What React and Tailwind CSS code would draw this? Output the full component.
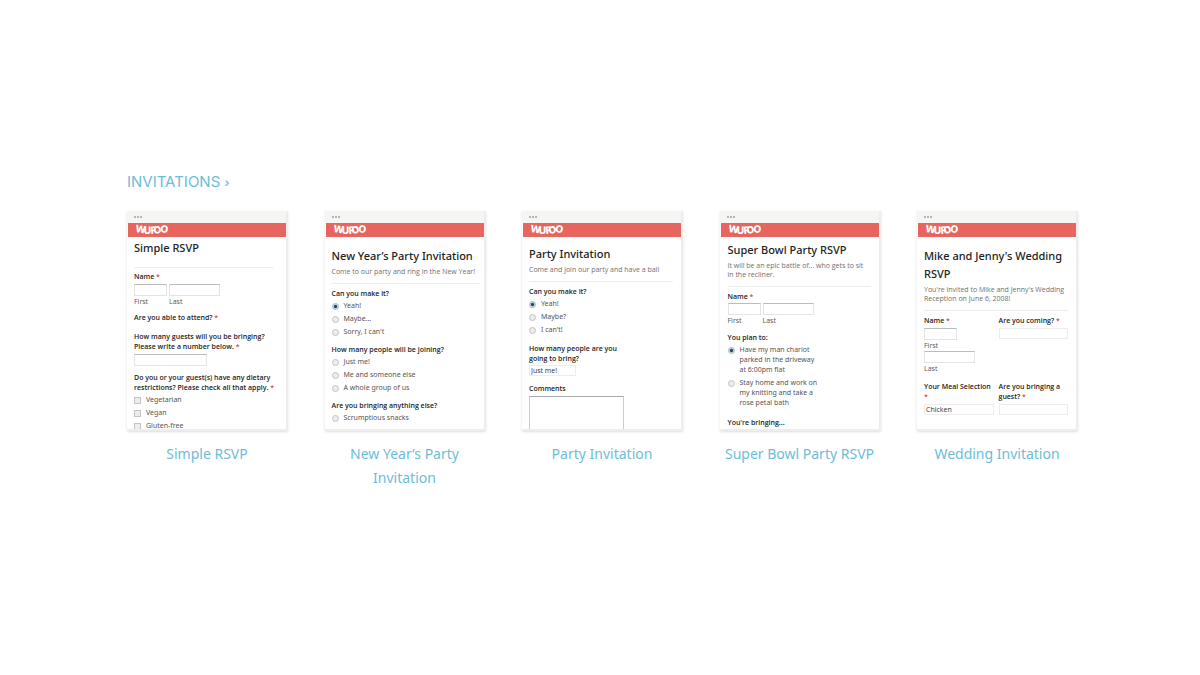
import { clsx } from 'clsx';

const Logo = () => (
    <svg width="36" height="14" viewBox="0 0 36 14" role="img" aria-label="Wufoo">
        <text
            x="0 9 16 19 25"
            y="9 11 11 11 9"
            rotate="8 -2 -6 -8 8"
            fill="#fff"
            fontFamily="Inter, sans-serif"
            fontSize="10"
            fontWeight="800"
        >
            WUFOO
        </text>
    </svg>
);

const Thumb = ({ children, className }) => (
    <div className="h-[220px] w-[161px] overflow-hidden border-r-2 border-b-2 border-[#ededed] bg-white shadow-sm">
        <div className="flex h-3 items-center gap-px bg-[#f5f5f4] pl-[7px]">
            <span className="size-[2px] bg-[#b5b5b5]" />
            <span className="size-[2px] bg-[#b5b5b5]" />
            <span className="size-[2px] bg-[#b5b5b5]" />
        </div>
        <div className="ml-px h-[14px] bg-[#e6655f] pl-[7px]">
            <Logo />
        </div>
        <div className={clsx("font-['Open_Sans',sans-serif] text-[7px] leading-[10px] text-[#555]", className)}>
            {children}
        </div>
    </div>
);

const Title = ({ children }) => (
    <h3 className="font-['Noto_Sans',sans-serif] text-[11px] leading-[18px] font-medium text-[#222]">{children}</h3>
);

const Desc = ({ children }) => (
    <p className="mt-[2px] leading-[9px] whitespace-nowrap text-[#707070]">{children}</p>
);

const Rule = ({ className }) => <hr className={clsx('border-[#eee]', className)} />;

const Star = () => <span className="text-[#e0444a]">*</span>;

const Label = ({ as: Tag = 'p', required, className, children, ...rest }) => (
    <Tag className={clsx('block font-semibold whitespace-nowrap text-[#222]', className)} {...rest}>
        {children} {required && <Star />}
    </Tag>
);

const Field = ({ className, ...rest }) => (
    <input
        type="text"
        className={clsx('block h-3 border border-[#e4e4e4] border-t-[#bbb] bg-white px-px', className)}
        {...rest}
    />
);

const Select = ({ options, className, ...rest }) => (
    <select
        className={clsx('block h-[11px] appearance-none border border-[#ececec] bg-white px-px leading-[9px] text-[#333]', className)}
        {...rest}
    >
        {options.map((o) => (
            <option key={o}>{o}</option>
        ))}
    </select>
);

const Option = ({ type = 'radio', name, checked, children }) => (
    <label className="flex items-start gap-[5px] pt-[2px] pb-px font-['Noto_Sans',sans-serif]">
        <input
            type={type}
            name={name}
            defaultChecked={checked}
            className={clsx(
                'mt-[2px] size-[7px] shrink-0 appearance-none border',
                type === 'radio' ? 'rounded-full' : '',
                checked ? 'border-[#a5bac8] bg-[radial-gradient(#1d4560_30%,#c5d8e4_60%)]' : 'border-[#c4c4c4] bg-[#ececec]'
            )}
        />
        <span className="whitespace-nowrap">{children}</span>
    </label>
);

const NameFields = ({ id }) => (
    <div className="flex gap-[2px]">
        <div>
            <Field id={`${id}-first`} className="w-[33px]" />
            <label htmlFor={`${id}-first`} className="mt-[2px] block leading-[8px]">First</label>
        </div>
        <div>
            <Field id={`${id}-last`} className="w-[51px]" />
            <label htmlFor={`${id}-last`} className="mt-[2px] block leading-[8px]">Last</label>
        </div>
    </div>
);

const SimpleRsvp = () => (
    <Thumb className="pt-[2px] pr-3 pl-[7px]">
        <Title>Simple RSVP</Title>
        <Rule className="mt-[10px]" />
        <Label required className="mt-1 mb-[2px]">Name</Label>
        <NameFields id="simple" />
        <Label required className="mt-[7px]">Are you able to attend?</Label>
        <Label as="label" htmlFor="guests" required className="mt-[9px]">
            How many guests will you be bringing?<br />Please write a number below.
        </Label>
        <Field id="guests" className="mt-[2px] w-[73px]" />
        <Label required className="mt-[7px]">
            Do you or your guest(s) have any dietary<br />restrictions? Please check all that apply.
        </Label>
        <Option type="checkbox">Vegetarian</Option>
        <Option type="checkbox">Vegan</Option>
        <Option type="checkbox">Gluten-free</Option>
    </Thumb>
);

const NewYears = () => (
    <Thumb className="pt-[10px] pr-1 pl-[7px]">
        <Title>New Year’s Party Invitation</Title>
        <Desc>Come to our party and ring in the New Year!</Desc>
        <Rule className="mt-[7px]" />
        <Label className="mt-[5px]">Can you make it?</Label>
        <Option name="ny-make" checked>Yeah!</Option>
        <Option name="ny-make">Maybe...</Option>
        <Option name="ny-make">Sorry, I can't</Option>
        <Label className="mt-[7px]">How many people will be joining?</Label>
        <Option name="ny-people">Just me!</Option>
        <Option name="ny-people">Me and someone else</Option>
        <Option name="ny-people">A whole group of us</Option>
        <Label className="mt-[7px]">Are you bringing anything else?</Label>
        <Option name="ny-else">Scrumptious snacks</Option>
    </Thumb>
);

const PartyInvitation = () => (
    <Thumb className="pt-2 pr-2 pl-[7px]">
        <Title>Party Invitation</Title>
        <Desc>Come and join our party and have a ball</Desc>
        <Rule className="mt-[7px]" />
        <Label className="mt-[5px]">Can you make it?</Label>
        <Option name="party-make" checked>Yeah!</Option>
        <Option name="party-make">Maybe?</Option>
        <Option name="party-make">I can't!</Option>
        <Label as="label" htmlFor="party-people" className="mt-2">
            How many people are you<br />going to bring?
        </Label>
        <Select id="party-people" options={['Just me!']} className="mt-px w-[47px]" />
        <Label as="label" htmlFor="comments" className="mt-2">Comments</Label>
        <textarea
            id="comments"
            className="mt-[2px] block h-9 w-[95px] resize-none border border-[#ccc] border-t-[#aaa]"
        />
    </Thumb>
);

const SuperBowl = () => (
    <Thumb className="pt-1 pr-2 pl-2">
        <Title>Super Bowl Party RSVP</Title>
        <Desc>It will be an epic battle of... who gets to sit<br />in the recliner.</Desc>
        <Rule className="mt-[7px]" />
        <Label required className="mt-[5px] mb-px">Name</Label>
        <NameFields id="bowl" />
        <Label className="mt-2">You plan to:</Label>
        <Option name="bowl-plan" checked>Have my man chariot<br />parked in the driveway<br />at 6:00pm flat</Option>
        <Option name="bowl-plan">Stay home and work on<br />my knitting and take a<br />rose petal bath</Option>
        <Label className="mt-[9px]">You're bringing...</Label>
    </Thumb>
);

const Wedding = () => (
    <Thumb className="pt-[10px] pr-2 pl-[7px]">
        <Title>Mike and Jenny's Wedding<br />RSVP</Title>
        <Desc>You're invited to Mike and Jenny's Wedding<br />Reception on June 6, 2008!</Desc>
        <Rule className="mt-[7px]" />
        <div className="mt-[5px] grid grid-cols-2 gap-x-[5px] gap-y-[9px]">
            <div>
                <Label required>Name</Label>
                <Field id="wed-first" className="mt-[2px] w-[33px]" />
                <label htmlFor="wed-first" className="mt-[2px] block leading-[8px]">First</label>
                <Field id="wed-last" className="mt-px w-[51px]" />
                <label htmlFor="wed-last" className="mt-[2px] block leading-[8px]">Last</label>
            </div>
            <div>
                <Label as="label" htmlFor="wed-coming" required>Are you coming?</Label>
                <Select id="wed-coming" options={['']} className="mt-[2px] w-full" />
            </div>
            <div>
                <Label as="label" htmlFor="wed-meal">Your Meal Selection<br /><Star /></Label>
                <Select id="wed-meal" options={['Chicken']} className="mt-[2px] w-full" />
            </div>
            <div>
                <Label as="label" htmlFor="wed-guest" required>Are you bringing a<br />guest?</Label>
                <Select id="wed-guest" options={['']} className="mt-[2px] w-full" />
            </div>
        </div>
    </Thumb>
);

const templates = [
    { name: 'Simple RSVP', Preview: SimpleRsvp },
    { name: 'New Year’s Party Invitation', Preview: NewYears },
    { name: 'Party Invitation', Preview: PartyInvitation },
    { name: 'Super Bowl Party RSVP', Preview: SuperBowl },
    { name: 'Wedding Invitation', Preview: Wedding },
];

const App = () => {
    return (
        <main className="min-h-screen bg-white pt-[170px]">
            <section className="mx-auto max-w-[954px] pl-1 text-[#6dbdd8]">
                <h2 className="font-[Inter,sans-serif] text-[15px] leading-6">
                    <a href="#invitations">INVITATIONS <span className="text-[12px] leading-none font-semibold">›</span></a>
                </h2>
                <div className="mt-[17px] flex flex-wrap justify-between gap-y-8">
                    {templates.map(({ name, Preview }) => (
                        <div key={name} className="w-40">
                            <Preview />
                            <a
                                href="#template"
                                className="mt-[11px] block px-1 text-center font-['Noto_Sans',sans-serif] text-[14px] leading-6"
                            >
                                {name}
                            </a>
                        </div>
                    ))}
                </div>
            </section>
        </main>
    );
};

export default App;
